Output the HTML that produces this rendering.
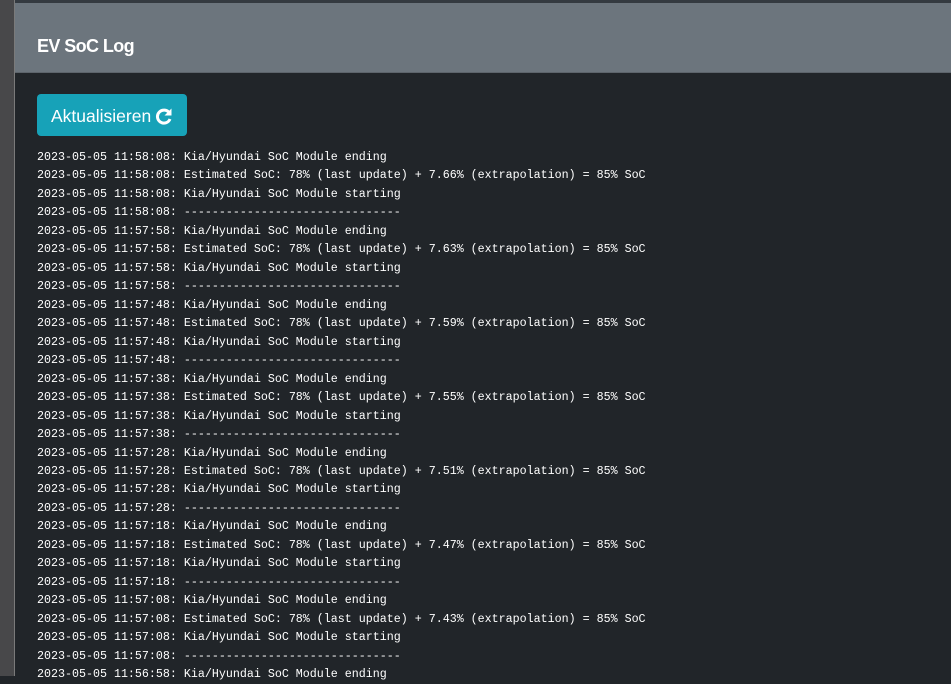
<!DOCTYPE html>
<html><head><style>
html,body{margin:0;padding:0;width:951px;height:676px;overflow:hidden;background:#212529;font-family:"Liberation Sans",sans-serif}
.left{position:absolute;left:0;top:0;width:14px;height:676px;background:#48484a}
.lb{position:absolute;left:14px;top:0;width:1px;height:676px;background:#7a7a7a}
.top{position:absolute;left:15px;top:0;width:936px;height:3px;background:#343a40}
.hdr{position:absolute;left:15px;top:3px;width:936px;height:69px;background:#6c757d;border-bottom:1px solid #5d646b}
.hdr h1{position:absolute;left:22px;top:33px;margin:0;font-size:18px;font-weight:bold;color:#fff;letter-spacing:-0.6px}
.btn{position:absolute;left:37px;top:94px;width:150px;height:42px;background:#17a2b8;border-radius:4px;color:#fff;font-size:17.5px;line-height:44px;box-sizing:border-box;padding-left:14px}
.btn svg{position:absolute;left:118px;top:13px}
pre{position:absolute;left:37px;top:148px;margin:0;font-family:"Liberation Mono",monospace;font-size:11.67px;line-height:18.47px;color:#fff}
</style></head><body>
<div class="left"></div><div class="lb"></div><div class="top"></div>
<div class="hdr"><h1>EV SoC Log</h1></div>
<div class="btn">Aktualisieren<svg width="18" height="18" viewBox="0 0 18 18"><path d="M14.5 6.2A6.5 6.5 0 1 0 15 12" fill="none" stroke="#fff" stroke-width="3"/><path d="M16.5 1.5v7h-7z" fill="#fff"/></svg></div>
<pre>2023-05-05 11:58:08: Kia/Hyundai SoC Module ending
2023-05-05 11:58:08: Estimated SoC: 78% (last update) + 7.66% (extrapolation) = 85% SoC
2023-05-05 11:58:08: Kia/Hyundai SoC Module starting
2023-05-05 11:58:08: -------------------------------
2023-05-05 11:57:58: Kia/Hyundai SoC Module ending
2023-05-05 11:57:58: Estimated SoC: 78% (last update) + 7.63% (extrapolation) = 85% SoC
2023-05-05 11:57:58: Kia/Hyundai SoC Module starting
2023-05-05 11:57:58: -------------------------------
2023-05-05 11:57:48: Kia/Hyundai SoC Module ending
2023-05-05 11:57:48: Estimated SoC: 78% (last update) + 7.59% (extrapolation) = 85% SoC
2023-05-05 11:57:48: Kia/Hyundai SoC Module starting
2023-05-05 11:57:48: -------------------------------
2023-05-05 11:57:38: Kia/Hyundai SoC Module ending
2023-05-05 11:57:38: Estimated SoC: 78% (last update) + 7.55% (extrapolation) = 85% SoC
2023-05-05 11:57:38: Kia/Hyundai SoC Module starting
2023-05-05 11:57:38: -------------------------------
2023-05-05 11:57:28: Kia/Hyundai SoC Module ending
2023-05-05 11:57:28: Estimated SoC: 78% (last update) + 7.51% (extrapolation) = 85% SoC
2023-05-05 11:57:28: Kia/Hyundai SoC Module starting
2023-05-05 11:57:28: -------------------------------
2023-05-05 11:57:18: Kia/Hyundai SoC Module ending
2023-05-05 11:57:18: Estimated SoC: 78% (last update) + 7.47% (extrapolation) = 85% SoC
2023-05-05 11:57:18: Kia/Hyundai SoC Module starting
2023-05-05 11:57:18: -------------------------------
2023-05-05 11:57:08: Kia/Hyundai SoC Module ending
2023-05-05 11:57:08: Estimated SoC: 78% (last update) + 7.43% (extrapolation) = 85% SoC
2023-05-05 11:57:08: Kia/Hyundai SoC Module starting
2023-05-05 11:57:08: -------------------------------
2023-05-05 11:56:58: Kia/Hyundai SoC Module ending</pre>
</body></html>
